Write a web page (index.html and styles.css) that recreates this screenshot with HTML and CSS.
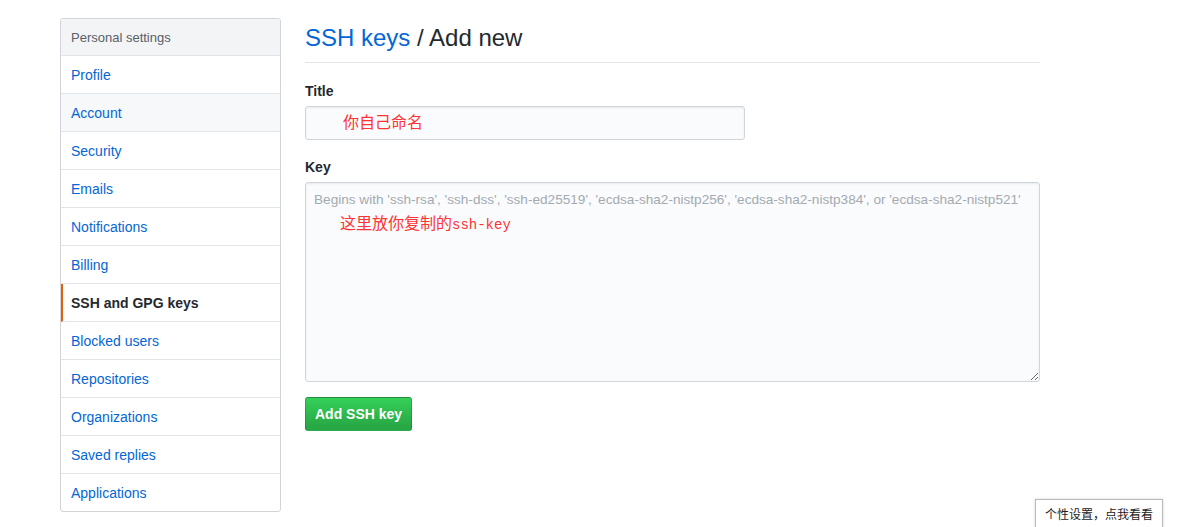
FILE: index.html
```html
<!DOCTYPE html>
<html lang="zh">
<head>
<meta charset="utf-8">
<title>SSH keys / Add new</title>
<link rel="stylesheet" href="styles.css">
</head>
<body>
<div class="page">
  <nav class="menu">
    <div class="menu-heading">Personal settings</div>
    <a class="menu-item" href="#">Profile</a>
    <a class="menu-item hover" href="#">Account</a>
    <a class="menu-item" href="#">Security</a>
    <a class="menu-item" href="#">Emails</a>
    <a class="menu-item" href="#">Notifications</a>
    <a class="menu-item" href="#">Billing</a>
    <a class="menu-item selected" href="#">SSH and GPG keys</a>
    <a class="menu-item" href="#">Blocked users</a>
    <a class="menu-item" href="#">Repositories</a>
    <a class="menu-item" href="#">Organizations</a>
    <a class="menu-item" href="#">Saved replies</a>
    <a class="menu-item" href="#">Applications</a>
  </nav>
  <main class="content">
    <h2 class="subhead"><a href="#">SSH keys</a> / Add new</h2>
    <form class="form">
      <label class="label">Title</label>
      <div class="field">
        <input class="form-control title-input" type="text" value="你自己命名">
      </div>
      <label class="label">Key</label>
      <div class="field key-field">
        <textarea class="form-control key-input" placeholder="Begins with 'ssh-rsa', 'ssh-dss', 'ssh-ed25519', 'ecdsa-sha2-nistp256', 'ecdsa-sha2-nistp384', or 'ecdsa-sha2-nistp521'"></textarea>
        <span class="note">这里放你复制的<span class="mono">ssh-key</span></span>
      </div>
      <button class="btn-primary" type="button">Add SSH key</button>
    </form>
  </main>
</div>
<div class="tip">个性设置，点我看看</div>
</body>
</html>
```

FILE: styles.css
```css
* { box-sizing: border-box; }
html, body { margin: 0; padding: 0; background: #fff; }
body {
  font-family: "Liberation Sans", Arial, "Noto Sans CJK SC", sans-serif;
  font-size: 14px;
  color: #24292e;
  overflow: hidden;
  height: 527px;
}
.page {
  display: flex;
  align-items: flex-start;
  padding: 18px 0 0 60px;
  gap: 24px;
}
.menu {
  width: 221px;
  flex: none;
  border: 1px solid #d1d5da;
  border-radius: 3px;
  background: #fff;
  display: flex;
  flex-direction: column;
}
.menu-heading {
  height: 37px;
  line-height: 35px;
  padding: 1px 10px 0;
  font-size: 13px;
  color: #586069;
  background: #f3f4f6;
  border-bottom: 1px solid #e1e4e8;
  border-radius: 3px 3px 0 0;
}
.menu-item {
  height: 38px;
  line-height: 36px;
  padding: 1px 10px 0;
  color: #0366d6;
  text-decoration: none;
  border-bottom: 1px solid #e1e4e8;
}
.menu-item:last-child { border-bottom: 0; height: 37px; }
.menu-item.hover { background: #f6f8fa; }
.menu-item.selected {
  color: #24292e;
  font-weight: bold;
  border-left: 2px solid #e36209;
  padding-left: 8px;
}
.content {
  width: 735px;
  flex: none;
}
.subhead {
  margin: 0;
  font-size: 24px;
  font-weight: normal;
  line-height: 40px;
  padding-bottom: 4px;
  border-bottom: 1px solid #e1e4e8;
}
.subhead a { color: #0366d6; text-decoration: none; }
.form { display: flex; flex-direction: column; align-items: flex-start; padding-top: 19px; }
.label {
  font-weight: bold;
  font-size: 14px;
  line-height: 18px;
  margin-bottom: 6px;
}
.field { position: relative; margin-bottom: 18px; }
.form-control {
  background: #fafbfc;
  border: 1px solid #d1d5da;
  border-radius: 3px;
  box-shadow: inset 0 1px 2px rgba(27,31,35,0.075);
  font-family: "Liberation Sans", Arial, sans-serif;
  font-size: 14px;
  outline: none;
}
.title-input {
  display: block;
  width: 440px;
  height: 34px;
  padding: 0 8px 4px 37px;
  color: #ff3333;
  font-family: "Noto Sans CJK SC", sans-serif;
  font-size: 16px;
}
.key-field { margin-bottom: 15px; }
.key-input {
  display: block;
  width: 735px;
  height: 200px;
  padding: 7px 8px;
  resize: vertical;
  line-height: 20px;
  font-size: 13.6px;
}
.key-input::placeholder { color: #a3aab1; }
.note {
  position: absolute;
  left: 35px;
  top: 29px;
  color: #ff3333;
  font-family: "Noto Sans CJK SC", sans-serif;
  font-size: 16px;
  line-height: 22px;
}
.mono { font-family: "Liberation Mono", monospace; font-size: 14px; }
.btn-primary {
  height: 34px;
  padding: 0 9px;
  color: #fff;
  font-family: "Liberation Sans", Arial, sans-serif;
  font-weight: bold;
  font-size: 14px;
  background: linear-gradient(-180deg, #34d058 0%, #28a745 90%);
  border: 1px solid rgba(27,31,35,0.2);
  border-radius: 3px;
}
.tip {
  position: absolute;
  right: 18px;
  bottom: -2px;
  width: 128px;
  height: 30px;
  line-height: 27px;
  text-align: center;
  font-family: "Noto Sans CJK SC", sans-serif;
  font-size: 12px;
  color: #222;
  background: #fff;
  border: 1px solid #b9b9b9;
  box-shadow: 0 0 3px rgba(0,0,0,0.15);
}
```
